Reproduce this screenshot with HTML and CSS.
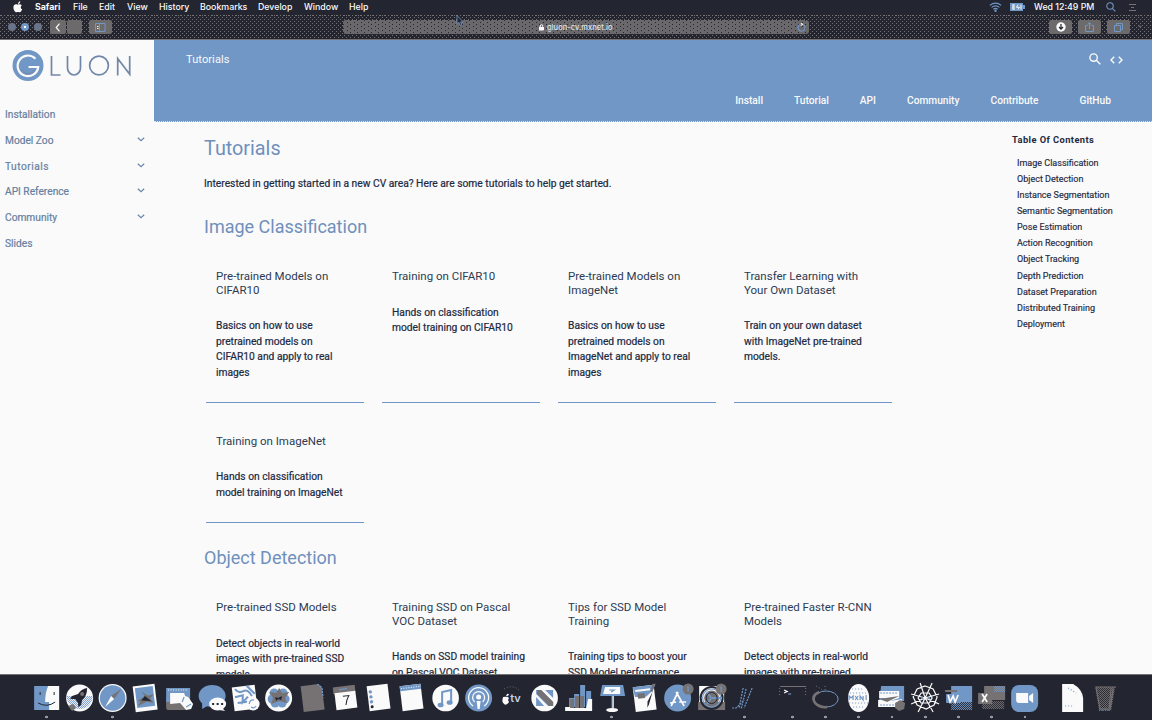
FILE: index.html
```html
<!DOCTYPE html>
<html lang="en">
<head>
<meta charset="utf-8">
<title>Tutorials — gluon-cv</title>
<link rel="stylesheet" href="styles.css">
</head>
<body>
<div class="screen">
  <div class="menubar">
    <svg class="apple" width="10" height="12" viewBox="0 0 10 12"><path fill="#fafafa" d="M5 3.2C5 1.6 6 .6 7.2.3 7.300 1.800 6.400 2.900 5 3.200ZM1 4.300C2 3 3.500 3.200 4.800 3.700 6 3.200 7.600 3 8.800 4.200 7.300 5.300 7.500 7.600 9.200 8.300 8.400 10.500 7.300 11.600 6.400 11.200 5.400 10.800 4.600 10.800 3.700 11.200 2 11.800-.8 7.200 1 4.300Z"/></svg>
    <nav class="menus"><b>Safari</b><span>File</span><span>Edit</span><span>View</span><span>History</span><span>Bookmarks</span><span>Develop</span><span>Window</span><span>Help</span></nav>
    <div class="status">
      <svg width="13" height="10" viewBox="0 0 13 10" fill="none" stroke="#7197c6" stroke-width="1.200"><path d="M.8 3.400Q6.500-1 12.200 3.400M2.600 5.400Q6.500 2.200 10.400 5.400M4.400 7.300Q6.500 5.600 8.600 7.300"/><circle cx="6.500" cy="8.800" r=".6" fill="#fafafa"/></svg>
      <svg width="15" height="8" viewBox="0 0 15 8"><path fill="#7197c6" d="M0 0h13v2h2v4h-2v2H0z"/><path d="M2.500 2h2.500M2.500 4H5M2.500 6H5M3 1.500v5M8 1.500 6.500 4.300h3L8 6.500M11 1.500v5" stroke="#fafafa" fill="none"/></svg>
      <span class="clock">Wed 12:49 PM</span>
      <svg width="10" height="10" viewBox="0 0 10 10" fill="none" stroke="#7197c6" stroke-width="1.100"><circle cx="4" cy="4" r="3.200"/><path d="m6.300 6.300 3 3"/></svg>
      <svg class="list" width="8" height="8" viewBox="0 0 8 8" stroke="#767273"><path d="M0 1.500h7M2 4.500h3M0 7.500h7"/></svg>
    </div>
  </div>
  <div class="toolbar">
    <div class="lights"><i></i><i class="mid"></i><i></i></div>
    <div class="btn back"><svg width="6" height="9" viewBox="0 0 6 9" fill="none" stroke="#fafafa" stroke-width="1.200"><path d="M4.500.7 1.200 4.500l3.300 3.800"/></svg></div>
    <div class="btn forward"></div>
    <div class="btn side"><svg width="11" height="9" viewBox="0 0 11 9" fill="none" stroke="#7197c6"><path d="M.5.500h9.500v8H.500zM4.500.500v8"/><path stroke="#fafafa" d="M2 3.500h1.500M2 5.500h1.500"/></svg></div>
    <div class="address">
      <svg width="5" height="7" viewBox="0 0 5 7"><path fill="none" stroke="#fafafa" d="M1.200 3.500V2a1.300 1.300 0 0 1 2.600 0v1.500"/><path fill="#fafafa" d="M0 3h5v3.500H0z"/></svg>
      <span>gluon-cv.mxnet.io</span>
      <svg class="reload" width="9" height="9" viewBox="0 0 9 9" fill="none" stroke="#7197c6" stroke-width="1.200"><path d="M6.500 1.700a3.500 3.500 0 1 1-3.700-.1"/><path stroke="#fafafa" d="M3.700 2.600 5.500 1.300 4 .2"/></svg>
    </div>
    <div class="tools">
      <div class="btn"><svg width="10" height="10" viewBox="0 0 10 10"><circle cx="5" cy="5" r="4.700" fill="#fafafa"/><path stroke="#232530" stroke-width="1.200" fill="none" d="M5 2v5M3 5l2 2.200L7 5"/></svg></div>
      <div class="btn"><svg width="9" height="10" viewBox="0 0 9 10" fill="none" stroke="#7197c6"><path d="M2.500 3.500h-2v6h8v-6h-2M4.500 7V1M2.700 2.500 4.500.800l1.800 1.700"/></svg></div>
      <div class="btn"><svg width="9" height="9" viewBox="0 0 9 9" fill="none" stroke="#7197c6"><path d="M.5 2.500h6v6h-6zM2.500 2.500v-2h6v6h-2"/></svg></div>
    </div>
    <span class="plus">+</span>
  </div>
  <svg class="cursor" width="9" height="12" viewBox="0 0 9 12"><path d="M1 .5v8.700l2-1.800 1.300 3 1.500-.7-1.200-2.800h2.700z" fill="#232530" stroke="#7197c6" stroke-width=".8"/></svg>

  <div class="page">
    <aside class="sidebar">
      <svg class="logo" width="122" height="34" viewBox="0 0 122 34" fill="none">
        <circle cx="16" cy="16.500" r="15.500" fill="#7197c6"/>
        <path d="M23.500 9.800A10.300 10.300 0 1 0 26.200 18H16.500" stroke="#fafafa" stroke-width="2.200"/>
        <path d="M22.500 21.500A8 8 0 0 1 9 20" stroke="#767273" stroke-width=".8" stroke-dasharray="1 1"/>
        <g stroke="#7187a8" stroke-width="1.700"><path d="M39.500 7v19h9M55.500 7v12a6.500 7 0 0 0 13 0v-12M105.700 26.500v-17l12 15.800V7"/><circle cx="87" cy="16.500" r="9.400"/></g>
      </svg>
      <ul class="side-nav">
        <li>Installation</li>
        <li>Model Zoo<svg class="chev" viewBox="0 0 8 5"><path d="m.8.800 3.200 3L7.200.800"/></svg></li>
        <li class="w-tut">Tutorials<svg class="chev" viewBox="0 0 8 5"><path d="m.8.800 3.200 3L7.200.800"/></svg></li>
        <li>API Reference<svg class="chev" viewBox="0 0 8 5"><path d="m.8.800 3.200 3L7.200.800"/></svg></li>
        <li>Community<svg class="chev" viewBox="0 0 8 5"><path d="m.8.800 3.200 3L7.200.800"/></svg></li>
        <li>Slides</li>
      </ul>
    </aside>
    <div class="main">
      <header class="hero">
        <div class="hero-top"><span class="crumb">Tutorials</span>
          <div class="hero-icons">
            <svg width="12" height="12" viewBox="0 0 12 12" fill="none" stroke="#fafafa" stroke-width="1.400"><circle cx="4.600" cy="4.600" r="3.700"/><path d="m7.300 7.300 4 4"/></svg>
            <svg width="13" height="8" viewBox="0 0 13 8" fill="none" stroke="#fafafa" stroke-width="1.400"><path d="M4.200.700 1 4l3.200 3.300M8.800.700 12 4 8.800 7.300"/></svg>
          </div>
        </div>
        <nav class="hero-nav"><span>Install</span><span>Tutorial</span><span>API</span><span>Community</span><span>Contribute</span><span class="gh">GitHub</span></nav>
      </header>
      <div class="columns">
        <article class="content">
          <h1>Tutorials</h1>
          <p class="intro">Interested in getting started in a new CV area? Here are some tutorials to help get started.</p>
          <h2>Image Classification</h2>
          <div class="cards">
            <section class="card"><h3>Pre-trained Models on<br>CIFAR10</h3><p>Basics on how to use<br>pretrained models on<br>CIFAR10 and apply to real<br>images</p></section>
            <section class="card"><h3>Training on CIFAR10</h3><p>Hands on classification<br>model training on CIFAR10</p></section>
            <section class="card"><h3>Pre-trained Models on<br>ImageNet</h3><p>Basics on how to use<br>pretrained models on<br>ImageNet and apply to real<br>images</p></section>
            <section class="card"><h3>Transfer Learning with<br>Your Own Dataset</h3><p>Train on your own dataset<br>with ImageNet pre-trained<br>models.</p></section>
            <section class="card"><h3>Training on ImageNet</h3><p>Hands on classification<br>model training on ImageNet</p></section>
          </div>
          <h2 class="second">Object Detection</h2>
          <div class="cards">
            <section class="card"><h3>Pre-trained SSD Models</h3><p>Detect objects in real-world<br>images with pre-trained SSD<br>models</p></section>
            <section class="card"><h3>Training SSD on Pascal<br>VOC Dataset</h3><p>Hands on SSD model training<br>on Pascal VOC Dataset</p></section>
            <section class="card"><h3>Tips for SSD Model<br>Training</h3><p>Training tips to boost your<br>SSD Model performance</p></section>
            <section class="card"><h3>Pre-trained Faster R-CNN<br>Models</h3><p>Detect objects in real-world<br>images with pre-trained</p></section>
          </div>
        </article>
        <aside class="toc"><h4>Table Of Contents</h4>
          <ul><li>Image Classification</li><li>Object Detection</li><li>Instance Segmentation</li><li>Semantic Segmentation</li><li>Pose Estimation</li><li>Action Recognition</li><li>Object Tracking</li><li>Depth Prediction</li><li>Dataset Preparation</li><li>Distributed Training</li><li>Deployment</li></ul>
        </aside>
      </div>
    </div>
  </div>

  <div class="dock">
    <svg class="run" viewBox="0 0 33 44"><defs>
      <pattern id="pb" width="2" height="2" patternUnits="userSpaceOnUse"><path fill="#7197c6" d="M0 0h1v1H0zM1 1h1v1H1z"/></pattern>
      <pattern id="pg" width="2" height="2" patternUnits="userSpaceOnUse"><path fill="#767273" d="M0 0h1v1H0zM1 1h1v1H1z"/></pattern>
    </defs><path class="b" d="M4 10h25v24H4z"/><path class="w" d="M18 10h11v24H19v-8h-4q0-9 3-16z"/><path class="ld" d="M10 16v3M24 16v3M8 27q9 5 17-1"/></svg>
    <svg viewBox="0 0 33 44"><circle class="w" cx="16.500" cy="22" r="13.500"/><path fill="url(#pb)" d="M3.500 20h26a13 13 0 0 1-26 0z"/><path class="g" d="m5 30 5-2 3 4-4 3z"/><path class="d" d="M24 12q-6 1-9 6l-6 2-2 3 5 0 3 4v4l3-2 1-5q5-4 5-12z"/><circle class="g" cx="19" cy="18" r="2"/></svg>
    <svg class="run" viewBox="0 0 33 44"><circle class="w" cx="16.500" cy="22" r="14"/><circle class="b" cx="16.500" cy="22" r="12.800"/><path class="g" d="m25 13-7 10-3-3z"/><path class="w" d="m9 31 6-11 3 3z"/></svg>
    <svg viewBox="0 0 33 44"><g transform="rotate(-7 16 22)"><path class="w" d="M5 9h22v26H5z"/><path class="b" d="M7 11h18v20H7z"/><path class="g" d="m8 24 8-4-3-5 6 5 6-1-4 4 3 5-7-2-9 3 3-4z"/><path class="d" d="m12 24 4-4 3 3 3 3-4-1z"/></g></svg>
    <svg viewBox="0 0 33 44"><path class="g" d="M3 22h20v12H5q-2 0-2-3z"/><path class="b" d="M3 12h24v14H3z"/><path class="ldash" d="M5 14h20"/><path class="w" d="M7 17h14l1 3 3 1 5 7-2 5-5 1-6-7-10 1z"/><path class="lb" d="m19 26 2-5M23 31l5-3"/></svg>
    <svg viewBox="0 0 33 44"><ellipse class="b" cx="16" cy="20" rx="13.500" ry="11"/><path class="b" d="m6 27 0 6 7-4z"/><ellipse class="w" cx="21.500" cy="28" rx="8.500" ry="6.500"/><path class="w" d="m26 32 3 3-6-1z"/><path class="d" d="M16 27h2v2h-2zM20.500 27h2v2h-2zM25 27h2v2h-2z"/></svg>
    <svg viewBox="0 0 33 44"><g transform="rotate(-7 16 22)"><path class="w" d="M4 10h23v24H4z"/><path class="lb2" d="M7 12q3 5 8 3t8 6M6 20l8-1-1 7 6-5M8 26h10M19 10l7 9"/></g><circle class="w" cx="24" cy="28" r="6.500"/><path class="lb" d="M20 28q1-5 5-4m2 6q-2 3-5 1"/></svg>
    <svg viewBox="0 0 33 44"><circle class="w" cx="16.500" cy="22" r="13.500"/><g class="b"><circle cx="12" cy="17" r="4.500"/><circle cx="21" cy="17" r="4.500"/><circle cx="10" cy="23" r="4.500"/><circle cx="23" cy="23" r="4.500"/><circle cx="13" cy="27" r="4.500"/><circle cx="20" cy="27" r="4.500"/></g><path class="g" d="m7 16 7 1 3-5 3 5 7-1-4 6 2 5-8-2-8 3 2-6z"/><path class="d" d="m13 21 3 1 4-2-1 4-3-1-2 2z"/></svg>
    <svg viewBox="0 0 33 44"><g transform="rotate(-7 16 22)"><path class="g" d="M6 9h18l3 4v22H6z"/><path class="ldashb" d="m23 9 4 4v10"/></g></svg>
    <svg viewBox="0 0 33 44"><g transform="rotate(-7 16 22)"><path class="g" d="M5 10h22v7H5z"/><path class="w" d="M6 16h21v17H6z"/><path class="lb" d="M11 13h8"/><path class="ld" d="M14 20h6q-3 4-4 9"/></g></svg>
    <svg viewBox="0 0 33 44"><g transform="rotate(-7 16 22)"><path class="w" d="M6 9h21v25H6z"/><g class="b"><circle cx="9" cy="15" r="1.700"/><circle cx="9" cy="20" r="1.700"/><circle cx="9" cy="25" r="1.700"/></g><circle class="d" cx="9" cy="30" r="1.500"/></g></svg>
    <svg viewBox="0 0 33 44"><g transform="rotate(-7 16 22)"><path class="w" d="M6 9h21v25H6z"/><path class="b" d="M6 9h21v5H6z"/><path class="ldash" d="M7 11.500h20"/></g></svg>
    <svg viewBox="0 0 33 44"><circle class="w" cx="16.500" cy="22" r="13.300"/><path class="lb2" d="M13 29V16l9-2v12"/><ellipse class="b" cx="11.500" cy="29" rx="3" ry="2.300"/><ellipse class="b" cx="20.500" cy="26.500" rx="3" ry="2.300"/></svg>
    <svg viewBox="0 0 33 44"><circle class="b" cx="16.500" cy="22" r="13.500"/><path class="lw" d="M11 30a10 10 0 1 1 11 0M12.500 26a6 6 0 1 1 8 0"/><circle class="w" cx="16.500" cy="21" r="2.500"/><path class="w" d="M14.500 25h4l-1 8h-2z"/></svg>
    <svg viewBox="0 0 33 44"><path class="w" d="M11 19.500c1-2 2-2 3-1l-2 2zM8 21q4-1 6 1-2 2 0 4-3 4-5 2-3-2-1-7z"/><path class="lgdash" d="M9 13q8-5 15 1"/><text class="tv" x="15" y="26">tv</text></svg>
    <svg viewBox="0 0 33 44"><circle class="w" cx="16.500" cy="22" r="13.300"/><path class="b" d="M8 14h5l12 12v4h-5L8 18zM17 14h8v8zM8 21l8 9H8z"/><path class="g" d="M9 14h4l12 12v4h-4L9 18z"/></svg>
    <svg viewBox="0 0 33 44"><path class="b" d="M7 22h5v9H7zM12 18h5v13h-5zM18 9h5v22h-5zM24 15h5v17h-5z"/><path class="g" d="M8 23h4v9H8zM13 20h4v12h-4zM18 20h4v12h-4z"/><path class="w" d="M3 31h5v1h16l2-9h4v12H3z"/></svg>
    <svg class="run" viewBox="0 0 33 44"><path class="b" d="m7 9 21 0 2 11H5z"/><path class="w" d="M10 11h15v7H8z"/><path class="lb" d="M14 14h5l-3 2M17 20v12"/><path class="lw" d="M18 20v12"/><ellipse class="w" cx="17" cy="34" rx="6" ry="2"/></svg>
    <svg viewBox="0 0 33 44"><g transform="rotate(-7 16 22)"><path class="w" d="M6 10h21v25H6z"/><path class="b" d="M6 10h23l-4 6-7 5-11-1z"/><path class="w" d="M8 13h15v2H8z"/><path class="g" d="M10 17h7v5h-7z"/><path class="d" d="m25 17-5 12-2 3 1-6z"/><path class="g" d="m29 9-4 8-2-1 3-7z"/></g></svg>
    <svg viewBox="0 0 33 44"><circle class="b" cx="16.500" cy="22" r="13.500"/><path class="lw2" d="m9 27 6-1m3 0h7M17 16l-7 14M15 16l8 14"/><circle class="g" cx="27" cy="13" r="5.500"/><path class="lb" d="M26 11h1v5"/></svg>
    <svg viewBox="0 0 33 44"><path class="w" d="M4 10h25v17H4z"/><path class="g" d="M3 26h27v8H3z"/><circle class="ld2" cx="16.500" cy="22" r="11"/><circle class="lb" cx="16.500" cy="22" r="9"/><circle class="g" cx="16.500" cy="22" r="7.500"/><path class="lb2" d="M17 22h8M16 22l-4-6m4 6-4 6"/><circle class="ld" cx="16.500" cy="22" r="5.500"/><circle class="g" cx="26" cy="13" r="5.500"/><path class="lb" d="M25 11h1v5"/></svg>
    <svg class="run" viewBox="0 0 33 44"><path class="ldashb" d="m15 12-4 20M24 12l-8 20M18 13 13 33M4 32h4l8-8"/></svg>
    <i class="gap"></i>
    <svg class="run" viewBox="0 0 33 44"><path class="lg" d="M4 10.500h26"/><path class="lgdash" d="M3.500 12v9M29.500 12v9"/><path class="lw" d="m8 14 3 1.500L8 17"/><path class="lb" d="M12 18h3"/></svg>
    <svg class="run" viewBox="0 0 33 44"><ellipse cx="17" cy="23" rx="12" ry="8" fill="none" stroke="#7197c6"/><path fill="none" stroke="#767273" stroke-width="2.500" d="M10 16q-9 4-4 11 5 5 12 4"/><path class="lgdash" d="m7 10 8 5m1-5v5"/></svg>
    <svg class="run" viewBox="0 0 33 44"><ellipse class="w" cx="16.500" cy="22" rx="10.500" ry="14"/><path class="lbdot" d="M10 13h12M8 17h18M7 27h19M11 31h11"/><path class="lb" d="M7 24v-4l2 2 2-2v4M13 24l3-4M13 20l3 4M18 24v-4l3 4v-4M24 19v5"/></svg>
    <svg class="run" viewBox="0 0 33 44"><path class="b" d="M6 10h23v15H4z"/><path class="w" d="M4 15h20v7l-9 3 12-2-4 8H3v-7l16-2H4z"/><path class="ldashb" d="M5 17h17M5 29h18"/><path class="g" d="m4 23 20-3-12 6zM20 27l5-3 5 3-1 6-5 2-4-3z"/></svg>
    <svg class="run" viewBox="0 0 33 44"><path class="lweb" d="m16 10 8 3 4 8-3 8-8 4-9-4-4-8 4-8zM11 7l5 15 7-15M2 18l14 4 14-4M2 28l14-6 14 6M9 36l7-14 8 14M12 17h8l3 5-3 5h-8l-3-5z"/><path class="b" d="M12 21h2v2h-2zM19 21h2v2h-2z"/></svg>
    <svg class="run" viewBox="0 0 33 44"><path class="b" d="M9 10h21v16H9z"/><path fill="url(#pb)" d="M9 26h21v8H9z"/><path class="b" d="M4 18h14v9H4z"/><path class="g" d="M3 14h12v2H3z"/><path class="lw2" d="m6 19 2 7 3-6 2 6 3-7"/></svg>
    <svg class="run" viewBox="0 0 33 44"><path class="g" d="M9 10h21v14H9zM3 17h14v11H3z"/><path fill="url(#pb)" d="M19 10h11v6H19z"/><path fill="url(#pg)" d="M7 25h22v8H7z"/><path class="lw2" d="m7 18 5 8m0-8-5 8"/></svg>
    <svg class="run" viewBox="0 0 33 44"><rect class="b" x="3" y="9" width="27" height="27" rx="8"/><path class="w" d="M8 17h12v10H11q-3 0-3-3zM21 20l4-3v10l-4-3z"/></svg>
    <i class="gap"></i>
    <svg viewBox="0 0 33 44"><path class="w" d="M6 8h11q9 5 10 14v14H6z"/><path class="lbdot" d="m12 12 8 5M9 30h8"/></svg>
    <svg viewBox="0 0 33 44"><path fill="url(#pg)" d="M6 11h20l-4 24H10z"/><path class="lg" d="M6 11h21M7 12l4 21h10l3-18M22 12l-2 20M24 12l-3 18"/><path class="lbdot" d="M10 34h12"/></svg>
  </div>
</div>
</body>
</html>
```
FILE: styles.css
```css
* { box-sizing: border-box; margin: 0; padding: 0; }
body { width: 1152px; height: 720px; overflow: hidden; background: #232530; font-family: Roboto, "Open Sans", sans-serif; }
ul { list-style: none; }
svg { flex: none; display: block; }
.screen { position: relative; width: 1152px; height: 720px; display: flex; flex-direction: column; }

.menubar { height: 15px; flex: none; display: flex; align-items: center; color: #fafafa; font: 500 8.8px/14px Inter, sans-serif; padding: 0 0 1px 13px; }
.menus { margin-left: 12px; display: grid; grid-template-columns: 38px 26px 28px 32px 41px 58px 46px 45px 40px; white-space: nowrap; }
.menus b { font-weight: 700; }
.status { margin-left: auto; display: flex; align-items: center; padding-right: 15px; }
.status > :nth-child(2) { margin-left: 8px; }
.clock { margin-left: 9px; width: 61px; white-space: nowrap; }
.status > :nth-child(4) { margin-left: 11px; }
.list { margin-left: 13px; }

.toolbar { height: 25px; flex: none; display: flex; align-items: center; border-bottom: 1px solid #767273; padding: 0 7px 0 8px;
  background-image: radial-gradient(circle at .5px .5px, #767273 .5px, transparent .6px), radial-gradient(circle at 2.5px 2.5px, #767273 .5px, transparent .6px), radial-gradient(circle at 1.5px .5px, #767273 .5px, transparent .6px);
  background-size: 4px 4px, 4px 4px, 3px 2px; background-repeat: repeat, repeat, repeat-x; }
.lights { display: flex; gap: 5px; width: 42px; }
.lights i { width: 8px; height: 8px; border-radius: 50%; background: #69738a; }
.lights .mid { background: radial-gradient(circle, #fafafa 1px, #7197c6 1.600px); }
.btn { width: 23px; height: 14px; border-radius: 2px; background: #6d6a6c; display: flex; align-items: center; justify-content: center; }
.back { width: 16px; }
.forward { width: 15px; margin-left: 1px; }
.side { margin-left: 7px; }
.address { margin-left: 231px; width: 466px; height: 14px; border-radius: 3px; background-color: #6b686b; background-image: radial-gradient(circle at .5px .5px, #232530 .5px, transparent .6px), radial-gradient(circle at 4.500px 2.500px, #232530 .5px, transparent .6px); background-size: 7px 4px; display: flex; align-items: center; padding: 0 3px 0 196px; color: #dfe6ef; font: 500 7.500px/14px Inter, sans-serif; }
.address span { margin: 1px 0 0 3px; letter-spacing: .03px; }
.reload { margin-left: auto; }
.tools { margin-left: auto; display: flex; gap: 6px; }
.plus { width: 15px; text-align: right; color: #767273; font-size: 7px; padding-right: 3px; }
.cursor { position: absolute; left: 456px; top: 15px; }

.page { height: 635px; flex: none; display: flex; overflow: hidden; background: #fafafa; border-bottom: 1px solid #767273; }
.sidebar { width: 154px; flex: none; color: #66809f; -webkit-text-stroke: .2px; }
.logo { margin: 9px 0 0 12px; }
.side-nav { margin: 19px 0 0; }
.side-nav li { height: 25.700px; display: flex; align-items: center; justify-content: space-between; padding: 0 9px 0 5px; font-size: 10.200px; }
.chev { width: 8px; height: 5px; margin-top: -2px; fill: none; stroke: #6b86ac; stroke-width: 1.200; }
.side-nav .w-tut { letter-spacing: .5px; }
.main { flex: 1; }
.hero { height: 82px; background: #7197c6; color: #fafafa; border-bottom: 1px dotted #dfe6ef; }
.hero-top { height: 41px; display: flex; justify-content: space-between; padding: 13px 29px 0 32px; }
.crumb { font-size: 11px; line-height: 14px; letter-spacing: .1px; }
.hero-icons { display: flex; gap: 9px; align-items: center; height: 11px; }
.hero-icons > :last-child { margin-top: 2px; }
.hero-nav { display: flex; justify-content: flex-end; gap: 31px; padding: 13px 41px 0 0; font-size: 10.200px; font-weight: 500; line-height: 14px; }
.gh { margin-left: 10px; }
.columns { display: flex; }
.content { width: 858px; padding: 14px 0 0 50px; color: #1c2942; }
h1 { font-size: 19.800px; line-height: 26px; font-weight: 400; color: #6f90bc; }
.intro { font-size: 10.280px; line-height: 16px; margin-top: 13.500px; -webkit-text-stroke: .2px; }
h2 { font-size: 18px; line-height: 24px; font-weight: 400; color: #6f90bc; margin-top: 23.500px; }
.cards { display: grid; grid-template-columns: repeat(4, 158px); gap: 32px 18px; margin: 31px 0 0 2px; }
.card { padding: 0 0 21.500px 10px; border-bottom: 1px solid #7197c6; white-space: nowrap; }
.card h3 { font-size: 11.500px; line-height: 13.500px; font-weight: 400; color: #2d3a52; }
.card p { font-size: 10.250px; line-height: 15.500px; margin-top: 21px; -webkit-text-stroke: .2px; }
h2.second { margin-top: 23.500px; }
.toc { color: #1c2942; padding-top: 10px; }
.toc h4 { font-size: 9.300px; line-height: 16px; font-weight: 700; letter-spacing: .43px; }
.toc ul { margin: 7px 0 0 5px; -webkit-text-stroke: .15px; }
.toc li { font-size: 9px; line-height: 16.080px; }

.dock { height: 45px; flex: none; display: flex; align-items: flex-start; padding: 1px 0 0 29.500px; background: #232530; }
.dock svg { width: 33.250px; height: 44px; fill: none; }
.gap { width: 14.500px; flex: none; }
.dock .run { background: radial-gradient(circle at 50% 41px, #9298a3 1.200px, transparent 1.600px); }
.dock .b { fill: #7197c6; } .dock .w { fill: #fafafa; } .dock .g { fill: #767273; } .dock .d { fill: #232530; }
.lb, .ldashb, .lbdot { stroke: #7197c6; stroke-width: 1.200; }
.lb2 { stroke: #7197c6; stroke-width: 2; }
.lw { stroke: #fafafa; stroke-width: 1.300; }
.lw2 { stroke: #fafafa; stroke-width: 1.700; }
.lweb { stroke: #fafafa; stroke-width: 1.200; }
.ld { stroke: #232530; } .ld2 { stroke: #232530; stroke-width: 2; }
.lg, .lgdash { stroke: #767273; }
.lgdash { stroke-dasharray: 1 2; }
.ldash { stroke: #fafafa; stroke-dasharray: 1 1.500; }
.ldashb { stroke-dasharray: 2 1; }
.lbdot { stroke-dasharray: 1 2; }
.dock .tv { fill: #c3d2e6; font: 600 11px Inter, sans-serif; }
```
